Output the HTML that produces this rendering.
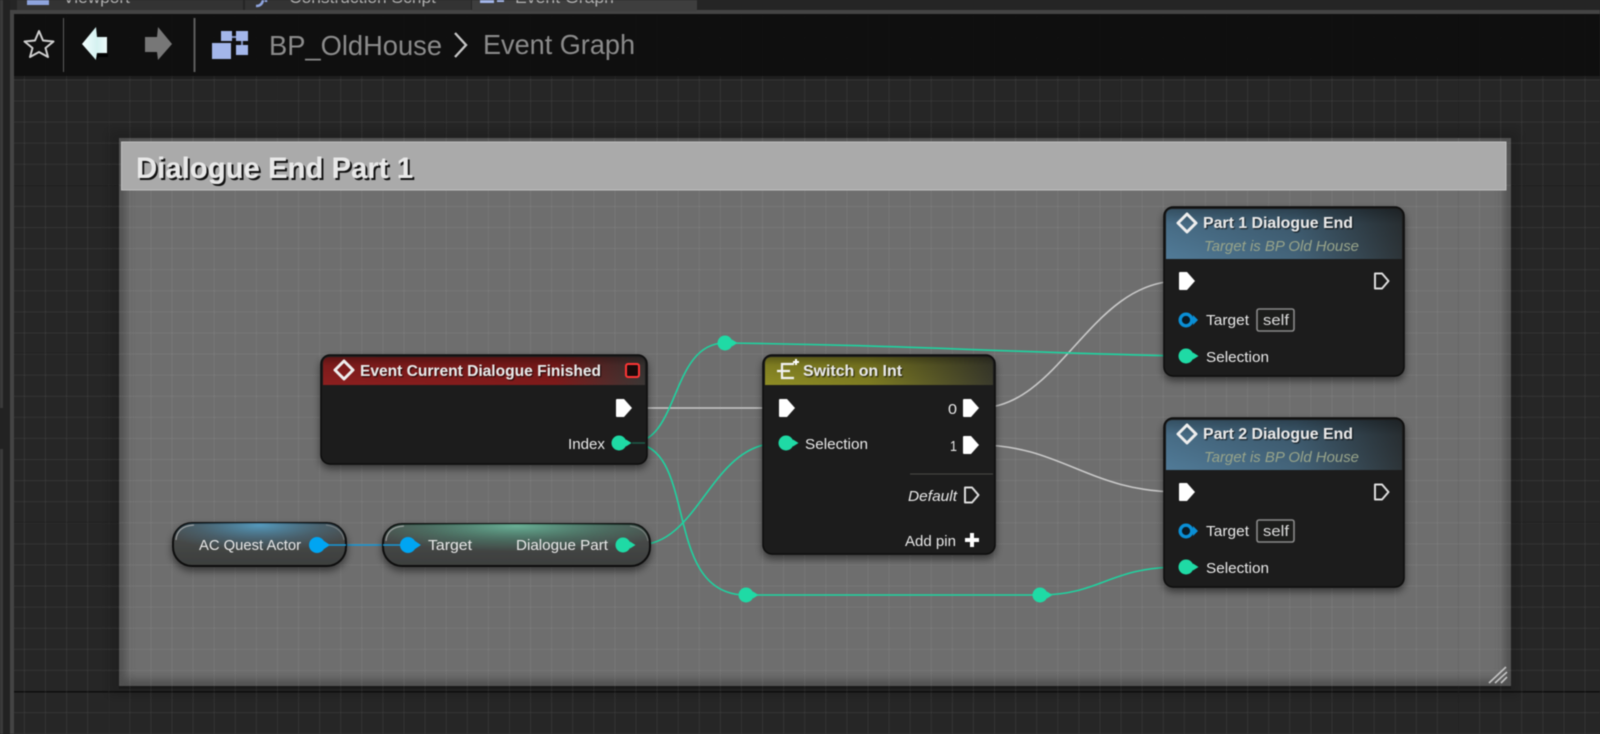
<!DOCTYPE html>
<html><head><meta charset="utf-8"><title>BP_OldHouse - Event Graph</title>
<style>html,body{margin:0;padding:0;background:#262626;overflow:hidden}svg{display:block;filter:blur(.45px)}
text{font-family:"Liberation Sans",sans-serif;fill:#e8e8e8}</style></head><body>
<svg xmlns="http://www.w3.org/2000/svg" width="1600" height="734" viewBox="0 0 1600 734">
<defs>
<pattern id="g" patternUnits="userSpaceOnUse" x="1458" y="691" width="21.09" height="21.09">
<rect width="1" height="21.09" fill="#fff" fill-opacity=".06"/><rect width="21.09" height="1" fill="#fff" fill-opacity=".06"/>
</pattern>
<filter id="sh" x="-20%" y="-20%" width="140%" height="150%"><feDropShadow dx="0" dy="4" stdDeviation="4" flood-color="#000" flood-opacity=".5"/></filter>
<filter id="bl" x="-5%" y="-5%" width="110%" height="110%"><feGaussianBlur stdDeviation="5"/></filter>
<filter id="ts" x="-5%" y="-10%" width="110%" height="130%"><feDropShadow dx="2" dy="2" stdDeviation="0.3" flood-color="#000" flood-opacity=".9"/></filter>
<filter id="ts2" x="-5%" y="-10%" width="110%" height="130%"><feDropShadow dx="1" dy="1" stdDeviation="0.4" flood-color="#000" flood-opacity=".8"/></filter>
<clipPath id="cc"><rect x="119" y="138" width="1392" height="548"/></clipPath>
<linearGradient id="red" x1="0" x2="1" y1="0" y2="0"><stop offset="0" stop-color="#8d1f1f"/><stop offset=".72" stop-color="#7f1a1a"/><stop offset="1" stop-color="#3a3735"/></linearGradient>
<linearGradient id="oli" x1="0" x2="1" y1="0" y2="0"><stop offset="0" stop-color="#8f8d25"/><stop offset=".45" stop-color="#7f7d22"/><stop offset="1" stop-color="#3a3a2c"/></linearGradient>
<linearGradient id="blu" x1="0" x2="1" y1="0" y2="0"><stop offset="0" stop-color="#517b98"/><stop offset=".55" stop-color="#44647a"/><stop offset="1" stop-color="#2d3438"/></linearGradient>
<linearGradient id="gl" x1="0" x2="0" y1="0" y2="1"><stop offset="0" stop-color="#000" stop-opacity=".35"/><stop offset=".3" stop-color="#000" stop-opacity=".12"/><stop offset="1" stop-color="#000" stop-opacity="0"/></linearGradient>
<linearGradient id="back" x1="0" x2="1" y1="0" y2="0"><stop offset="0" stop-color="#f4ffff"/><stop offset=".6" stop-color="#d4f1f0"/><stop offset="1" stop-color="#eefafa"/></linearGradient>
<linearGradient id="pill" x1="0" x2="0" y1="0" y2="1"><stop offset="0" stop-color="#4d4f4e"/><stop offset="1" stop-color="#3c3e3d"/></linearGradient>
<radialGradient id="pb" cx=".5" cy=".05" r=".6"><stop offset="0" stop-color="#57a7d0" stop-opacity=".85"/><stop offset=".6" stop-color="#4a8fb5" stop-opacity=".3"/><stop offset="1" stop-color="#4a8fb5" stop-opacity="0"/></radialGradient>
<radialGradient id="pg" cx=".5" cy=".05" r=".6"><stop offset="0" stop-color="#6fc0a2" stop-opacity=".85"/><stop offset=".6" stop-color="#4fa083" stop-opacity=".35"/><stop offset="1" stop-color="#4fa083" stop-opacity="0"/></radialGradient>
<clipPath id="p1"><rect x="173" y="523" width="173" height="43" rx="19"/></clipPath>
<clipPath id="p2"><rect x="383" y="524" width="267" height="42" rx="19"/></clipPath>
<path id="ex" d="M0 -8 Q0 -9 1 -9 H8 L16 0 L8 9 H1 Q0 9 0 8Z" fill="#fff"/>
<path id="eo" d="M1 -7.5 H8 L14.5 0 L8 7.5 H1Z" fill="none" stroke="#ddd" stroke-width="2" stroke-linejoin="round"/>
<path id="dm" d="M0 -9 L9 0 L0 9 L-9 0Z" fill="none" stroke="#eee" stroke-width="3" stroke-linejoin="round"/>
<g id="dp"><path d="M7 -3.5 L12.5 0 L7 3.5Z" fill="#1fdaa5"/><circle r="7.5" fill="#1fdaa5"/></g>
<g id="bp"><path d="M7 -4 L13 0 L7 4Z" fill="#00a5f2"/><circle r="8" fill="#00a5f2"/></g>
</defs>

<rect width="1600" height="734" fill="#262626"/>

<!-- major grid lines beneath the comment -->
<g fill="#000">
<rect x="108" y="13" width="1" height="721" fill-opacity=".25"/><rect x="277" y="13" width="1" height="125" fill-opacity=".3"/><rect x="445" y="13" width="1" height="125" fill-opacity=".15"/><rect x="614" y="13" width="1" height="125" fill-opacity=".15"/><rect x="783" y="13" width="1" height="125" fill-opacity=".15"/><rect x="952" y="13" width="1" height="125" fill-opacity=".15"/><rect x="1120" y="13" width="1" height="125" fill-opacity=".15"/><rect x="1289" y="13" width="1" height="125" fill-opacity=".15"/><rect x="1458" y="13" width="1" height="721" fill-opacity=".45"/>
<rect x="14" y="185" width="1586" height="1" fill-opacity=".5"/><rect x="14" y="353" width="1586" height="1" fill-opacity=".2"/><rect x="14" y="522" width="1586" height="1" fill-opacity=".4"/><rect x="14" y="691" width="1586" height="1.4" fill-opacity=".95"/>
</g>

<!-- comment box -->
<rect x="108" y="130" width="1412" height="566" fill="#000" fill-opacity=".15" filter="url(#bl)"/>
<rect x="119" y="138" width="1392" height="548" fill="#6e6e6e"/>
<g clip-path="url(#cc)"><rect x="119" y="138" width="1392" height="548" fill="none" stroke="#4c4c4c" stroke-width="12" filter="url(#bl)"/></g>
<rect x="119" y="686" width="1392" height="3" fill="#111" fill-opacity=".4"/>

<!-- minor grid -->
<rect x="14" y="13" width="1586" height="721" fill="url(#g)"/>
<rect x="1458" y="190" width="1" height="496" fill="#000" fill-opacity=".12"/>

<!-- comment header -->
<rect x="121.5" y="142" width="1384.5" height="48" fill="#aaaaaa" stroke="#c0c0c0" stroke-width="1"/>
<text x="136" y="178" font-size="30" font-weight="700" textLength="277" lengthAdjust="spacingAndGlyphs" fill="#f2f2f2" filter="url(#ts)">Dialogue End Part 1</text>
<g stroke="#c4c4c4" stroke-width="1.6"><path d="M1489 683 L1506 667M1495 683 L1507 672M1501 683 L1507 677"/></g>

<!-- wires -->
<g fill="none" stroke-width="1.6">
<g stroke="#c9c9c9"><path d="M632 408H779"/><path d="M979 408C1060 408 1090 281 1179 281"/><path d="M979 445C1060 445 1090 492 1179 492"/></g>
<g stroke="#1fd3a0"><path d="M631 443C680 443 670 343 725 343"/><path d="M725 343C900 345 1000 352 1179 356"/><path d="M631 443C700 443 660 595 746 595"/><path d="M746 595H1040"/><path d="M1040 595C1100 595 1110 567 1179 567"/><path d="M638 545C700 545 710 443 779 443"/></g>
<path d="M325 545H400" stroke="#1797d6"/>
</g>
<use href="#dp" x="725" y="343"/><use href="#dp" x="746" y="595"/><use href="#dp" x="1040" y="595"/>

<!-- event node -->
<g filter="url(#sh)"><rect x="321" y="355" width="326" height="109" rx="9" fill="#1c1d1b" stroke="#0c0c0c" stroke-width="1.5"/></g>
<path d="M323 385V364Q323 357 330 357H638Q645 357 645 364V385Z" fill="url(#red)"/>
<path d="M323 385V364Q323 357 330 357H638Q645 357 645 364V385Z" fill="url(#gl)"/>
<use href="#dm" x="344" y="370"/>
<text x="360" y="376" font-size="16" font-weight="700" textLength="241" lengthAdjust="spacingAndGlyphs" fill="#f4f4f4" filter="url(#ts2)">Event Current Dialogue Finished</text>
<rect x="626" y="364" width="13" height="13" rx="2" fill="#1a0a0a" stroke="#ff3535" stroke-width="2"/>
<use href="#ex" x="616" y="408"/>
<text x="568" y="449" font-size="15" textLength="37" lengthAdjust="spacingAndGlyphs">Index</text>
<use href="#dp" x="619" y="443"/>
<path d="M632 443H645" stroke="#1fd3a0" stroke-opacity=".35" stroke-width="1.5"/>

<!-- pills -->
<g filter="url(#sh)"><rect x="173" y="523" width="173" height="43" rx="19" fill="url(#pill)" stroke="#0b0b0b" stroke-width="2"/></g>
<g clip-path="url(#p1)"><rect x="173" y="523" width="173" height="43" fill="url(#pb)"/></g>
<path d="M176 540Q177 526 194 525" fill="none" stroke="#bdbdbd" stroke-width="1.2" stroke-opacity=".7"/>
<path d="M326 525Q342 527 344 540" fill="none" stroke="#aaa" stroke-width="1" stroke-opacity=".5"/>
<text x="199" y="550" font-size="15" textLength="102" lengthAdjust="spacingAndGlyphs">AC Quest Actor</text>
<use href="#bp" x="317" y="545"/>
<path d="M329 545H346" stroke="#1797d6" stroke-width="1.6"/>

<g filter="url(#sh)"><rect x="383" y="524" width="267" height="42" rx="19" fill="url(#pill)" stroke="#0b0b0b" stroke-width="2"/></g>
<g clip-path="url(#p2)"><rect x="383" y="524" width="267" height="42" fill="url(#pg)"/></g>
<path d="M386 541Q387 527 404 526" fill="none" stroke="#bdbdbd" stroke-width="1.2" stroke-opacity=".7"/>
<path d="M630 526Q646 528 648 541" fill="none" stroke="#aaa" stroke-width="1" stroke-opacity=".5"/>
<path d="M383 545H400" stroke="#1797d6" stroke-width="1.6"/>
<use href="#bp" x="408" y="545"/>
<text x="428" y="550" font-size="15" textLength="44" lengthAdjust="spacingAndGlyphs">Target</text>
<text x="516" y="550" font-size="15" textLength="92" lengthAdjust="spacingAndGlyphs">Dialogue Part</text>
<use href="#dp" x="623" y="545"/>

<!-- switch node -->
<g filter="url(#sh)"><rect x="763" y="355" width="232" height="199" rx="9" fill="#1c1d1b" stroke="#0c0c0c" stroke-width="1.5"/></g>
<path d="M765 385V364Q765 357 772 357H986Q993 357 993 364V385Z" fill="url(#oli)"/>
<path d="M765 385V364Q765 357 772 357H986Q993 357 993 364V385Z" fill="url(#gl)"/>
<path d="M794 364H782V378H794M777 371H790" fill="none" stroke="#f2f2f2" stroke-width="2.2"/>
<path d="M793 362H799M796 359V365" stroke="#fff" stroke-width="2"/>
<text x="803" y="376" font-size="16" font-weight="700" textLength="99" lengthAdjust="spacingAndGlyphs" fill="#f4f4f4" filter="url(#ts2)">Switch on Int</text>
<use href="#ex" x="779" y="408"/>
<use href="#dp" x="786" y="443"/>
<text x="805" y="449" font-size="15" textLength="63" lengthAdjust="spacingAndGlyphs">Selection</text>
<text x="948" y="414" font-size="15" textLength="9" lengthAdjust="spacingAndGlyphs">0</text>
<use href="#ex" x="963" y="408"/>
<text x="950" y="451" font-size="15" textLength="7" lengthAdjust="spacingAndGlyphs">1</text>
<use href="#ex" x="963" y="445"/>
<path d="M910 474H993" stroke="#4a4a46" stroke-width="1"/>
<text x="908" y="501" font-size="15" font-style="italic" textLength="49" lengthAdjust="spacingAndGlyphs">Default</text>
<use href="#eo" x="964" y="495"/>
<text x="905" y="546" font-size="15" textLength="51" lengthAdjust="spacingAndGlyphs">Add pin</text>
<path d="M972 533V547M965 540H979" stroke="#fff" stroke-width="4"/>

<!-- part 1 -->
<g filter="url(#sh)"><rect x="1164" y="207" width="240" height="169" rx="9" fill="#1c1d1b" stroke="#0c0c0c" stroke-width="1.5"/></g>
<path d="M1166 259V216Q1166 209 1173 209H1395Q1402 209 1402 216V259Z" fill="url(#blu)"/>
<path d="M1166 259V216Q1166 209 1173 209H1395Q1402 209 1402 216V259Z" fill="url(#gl)"/>
<use href="#dm" x="1187" y="223"/>
<text x="1203" y="228" font-size="16" font-weight="700" textLength="150" lengthAdjust="spacingAndGlyphs" fill="#f4f4f4" filter="url(#ts2)">Part 1 Dialogue End</text>
<text x="1204" y="251" font-size="14.5" font-style="italic" textLength="155" lengthAdjust="spacingAndGlyphs" style="fill:#98a48a">Target is BP Old House</text>
<use href="#ex" x="1179" y="281"/><use href="#eo" x="1374" y="281"/>
<circle cx="1186" cy="320" r="5.8" fill="#0a1a24" stroke="#0a8fd6" stroke-width="3.4"/><path d="M1193 315L1198 320L1193 325Z" fill="#0a8fd6"/>
<text x="1206" y="325" font-size="15" textLength="43" lengthAdjust="spacingAndGlyphs">Target</text>
<rect x="1257" y="309" width="37" height="22" rx="2" fill="#1c1d1b" stroke="#8a8a8a" stroke-width="1.6"/>
<text x="1263" y="325" font-size="14.5" textLength="26" lengthAdjust="spacingAndGlyphs" style="fill:#ddd">self</text>
<use href="#dp" x="1186" y="356"/>
<text x="1206" y="362" font-size="15" textLength="63" lengthAdjust="spacingAndGlyphs">Selection</text>

<!-- part 2 -->
<g transform="translate(0 211)">
<g filter="url(#sh)"><rect x="1164" y="207" width="240" height="169" rx="9" fill="#1c1d1b" stroke="#0c0c0c" stroke-width="1.5"/></g>
<path d="M1166 259V216Q1166 209 1173 209H1395Q1402 209 1402 216V259Z" fill="url(#blu)"/>
<path d="M1166 259V216Q1166 209 1173 209H1395Q1402 209 1402 216V259Z" fill="url(#gl)"/>
<use href="#dm" x="1187" y="223"/>
<text x="1203" y="228" font-size="16" font-weight="700" textLength="150" lengthAdjust="spacingAndGlyphs" fill="#f4f4f4" filter="url(#ts2)">Part 2 Dialogue End</text>
<text x="1204" y="251" font-size="14.5" font-style="italic" textLength="155" lengthAdjust="spacingAndGlyphs" style="fill:#98a48a">Target is BP Old House</text>
<use href="#ex" x="1179" y="281"/><use href="#eo" x="1374" y="281"/>
<circle cx="1186" cy="320" r="5.8" fill="#0a1a24" stroke="#0a8fd6" stroke-width="3.4"/><path d="M1193 315L1198 320L1193 325Z" fill="#0a8fd6"/>
<text x="1206" y="325" font-size="15" textLength="43" lengthAdjust="spacingAndGlyphs">Target</text>
<rect x="1257" y="309" width="37" height="22" rx="2" fill="#1c1d1b" stroke="#8a8a8a" stroke-width="1.6"/>
<text x="1263" y="325" font-size="14.5" textLength="26" lengthAdjust="spacingAndGlyphs" style="fill:#ddd">self</text>
<use href="#dp" x="1186" y="356"/>
<text x="1206" y="362" font-size="15" textLength="63" lengthAdjust="spacingAndGlyphs">Selection</text>
</g>

<!-- toolbar -->
<rect x="14" y="14" width="1586" height="62" fill="#0d0d0d" fill-opacity=".92"/>
<rect x="14" y="76" width="1586" height="3" fill="#000" fill-opacity=".2"/>
<path d="M39 31L43 40.5L53.5 41.5L45.5 48L48 57L39 52L30 57L32.5 48L24.5 41.5L35 40.5Z" fill="none" stroke="#cfcfcf" stroke-width="2" stroke-linejoin="round"/>
<rect x="63" y="18" width="1" height="54" fill="#5c5c5c"/>
<rect x="193.5" y="18" width="2" height="54" fill="#5c5c5c"/>
<path d="M96 27L82 44L96 60L97 53H107V37H97Z" fill="url(#back)"/>
<path d="M96 60L99 57H108V54H97Z" fill="#000"/>
<path d="M145 37H157L158 27L172 44L158 60L157 52H145Z" fill="#777"/>
<g fill="#a3b6ea"><path d="M221 37H242V49H238" fill="none" stroke="#7d8db8" stroke-width="2"/><rect x="212" y="43" width="19" height="16"/><rect x="221" y="31" width="11" height="10"/><rect x="236" y="31" width="12" height="10"/><rect x="236" y="45" width="12" height="10"/></g>
<text x="269" y="55" font-size="28" textLength="173" lengthAdjust="spacingAndGlyphs" style="fill:#8b8b8b">BP_OldHouse</text>
<path d="M455 33L466 45L455 57" fill="none" stroke="#c4c4c4" stroke-width="2.4"/>
<text x="483" y="54" font-size="28" textLength="152" lengthAdjust="spacingAndGlyphs" style="fill:#8b8b8b">Event Graph</text>

<!-- left + top chrome -->
<rect x="0" y="0" width="1600" height="10" fill="#252525"/>
<rect x="0" y="0" width="10" height="734" fill="#222"/>
<rect x="0" y="0" width="3" height="408" fill="#3a3a3a"/><rect x="0" y="449" width="3" height="285" fill="#3a3a3a"/>
<rect x="10" y="10" width="4" height="724" fill="#444"/>
<rect x="10" y="10" width="1590" height="4" fill="#444"/>
<rect x="17" y="0" width="226" height="10" fill="#333"/>
<rect x="245" y="0" width="226" height="10" fill="#333"/>
<rect x="472" y="0" width="225" height="11" fill="#3e3e3e"/>
<rect x="27" y="0" width="22" height="5" fill="#8ea4dd"/>
<text x="63" y="3" font-size="17" textLength="67" lengthAdjust="spacingAndGlyphs" style="fill:#b0b0b0">Viewport</text>
<path d="M256 6Q262 6 263 0M266 0V2" fill="none" stroke="#8ea4dd" stroke-width="2.5"/>
<text x="289" y="3" font-size="17" textLength="147" lengthAdjust="spacingAndGlyphs" style="fill:#b0b0b0">Construction Script</text>
<rect x="480" y="0" width="14" height="3" fill="#a3b6ea"/><rect x="497" y="0" width="7" height="2" fill="#a3b6ea"/>
<text x="515" y="3" font-size="17" textLength="99" lengthAdjust="spacingAndGlyphs" style="fill:#b0b0b0">Event Graph</text>
</svg>
</body></html>
